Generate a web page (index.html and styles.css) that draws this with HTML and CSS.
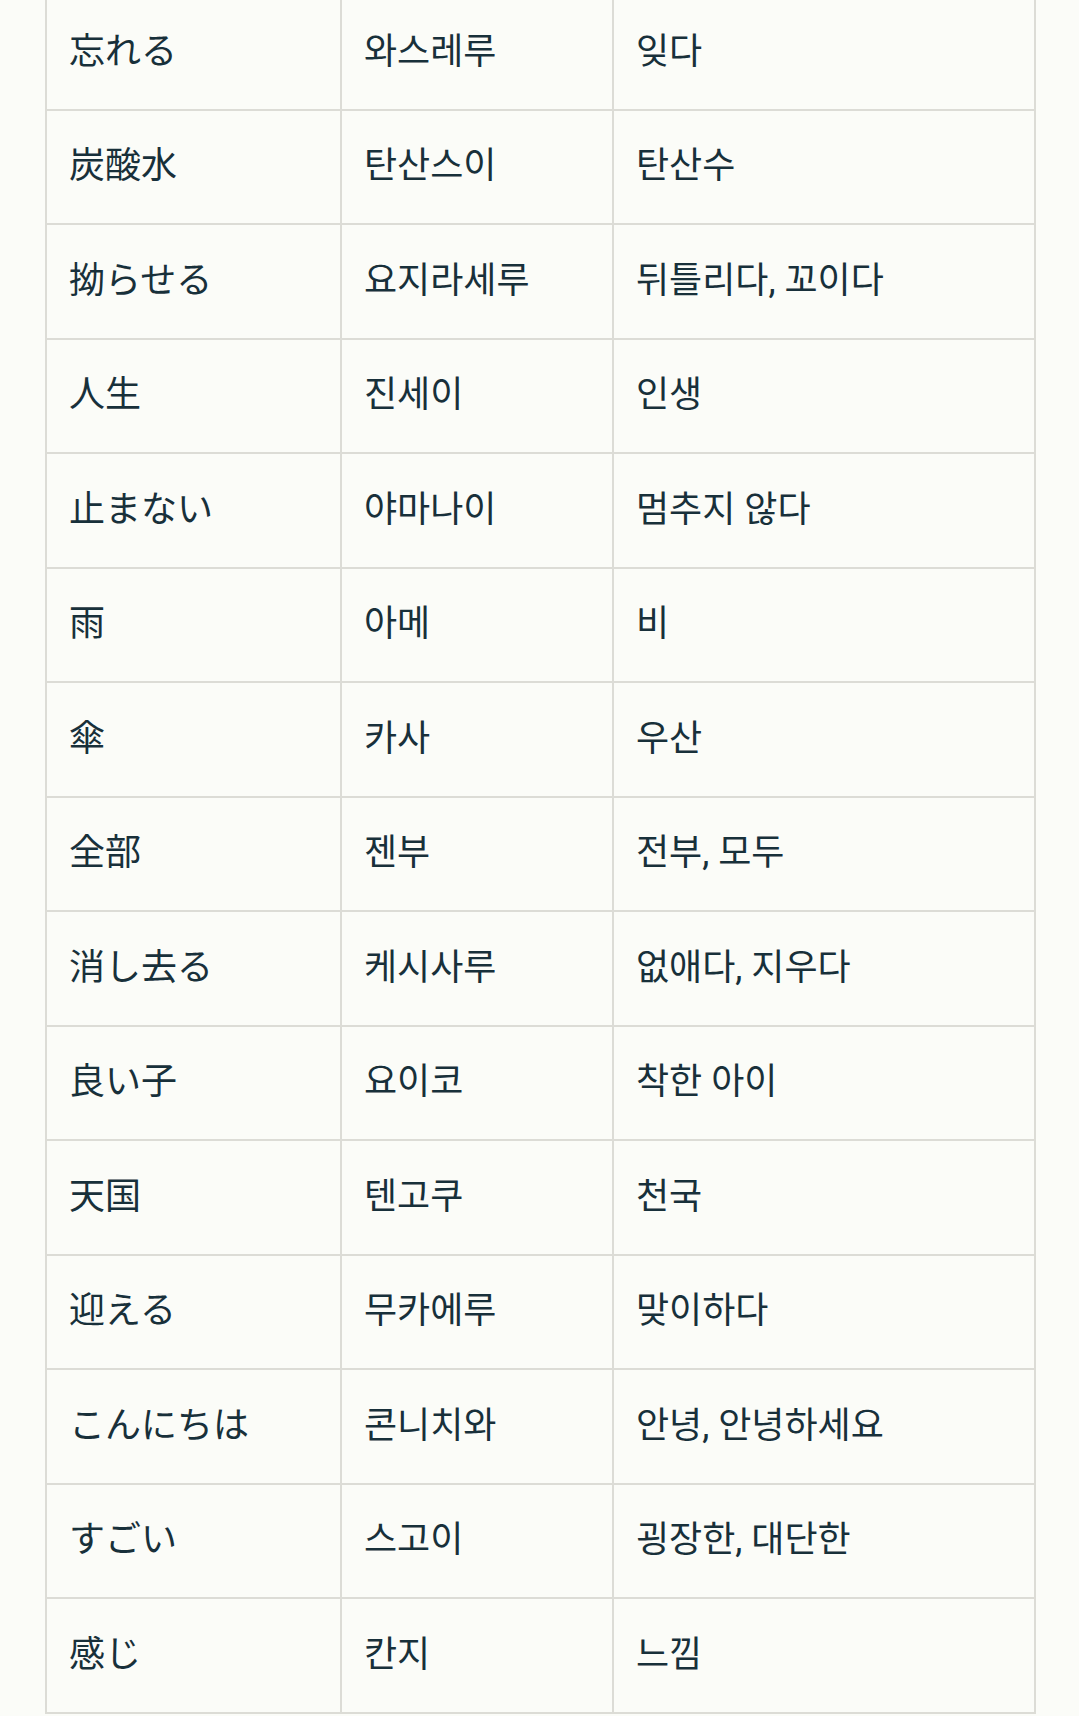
FILE: index.html
```html
<!DOCTYPE html>
<html lang="ko">
<head>
<meta charset="utf-8">
<link rel="stylesheet" href="styles.css">
</head>
<body>
<div class="wrap">
<table class="vocab">
<tbody>
<tr><td class="ja" lang="ja">忘れる</td><td class="ko">와스레루</td><td class="ko">잊다</td></tr>
<tr><td class="ja" lang="ja">炭酸水</td><td class="ko">탄산스이</td><td class="ko">탄산수</td></tr>
<tr><td class="ja" lang="ja">拗らせる</td><td class="ko">요지라세루</td><td class="ko">뒤틀리다, 꼬이다</td></tr>
<tr><td class="ja" lang="ja">人生</td><td class="ko">진세이</td><td class="ko">인생</td></tr>
<tr><td class="ja" lang="ja">止まない</td><td class="ko">야마나이</td><td class="ko">멈추지 않다</td></tr>
<tr><td class="ja" lang="ja">雨</td><td class="ko">아메</td><td class="ko">비</td></tr>
<tr><td class="ja" lang="ja">傘</td><td class="ko">카사</td><td class="ko">우산</td></tr>
<tr><td class="ja" lang="ja">全部</td><td class="ko">젠부</td><td class="ko">전부, 모두</td></tr>
<tr><td class="ja" lang="ja">消し去る</td><td class="ko">케시사루</td><td class="ko">없애다, 지우다</td></tr>
<tr><td class="ja" lang="ja">良い子</td><td class="ko">요이코</td><td class="ko">착한 아이</td></tr>
<tr><td class="ja" lang="ja">天国</td><td class="ko">텐고쿠</td><td class="ko">천국</td></tr>
<tr><td class="ja" lang="ja">迎える</td><td class="ko">무카에루</td><td class="ko">맞이하다</td></tr>
<tr><td class="ja" lang="ja">こんにちは</td><td class="ko">콘니치와</td><td class="ko">안녕, 안녕하세요</td></tr>
<tr><td class="ja" lang="ja">すごい</td><td class="ko">스고이</td><td class="ko">굉장한, 대단한</td></tr>
<tr><td class="ja" lang="ja">感じ</td><td class="ko">칸지</td><td class="ko">느낌</td></tr>
</tbody>
</table>
</div>
</body>
</html>
```
FILE: styles.css
```css
html, body {
  margin: 0;
  padding: 0;
  background: #fbfcf8;
}
.wrap {
  padding: 0 45px 0 45px;
  margin-top: -6px;
}
.vocab {
  width: 989px;
  border-collapse: collapse;
  table-layout: fixed;
  color: #18303a;
  font-size: 36px;
}
.vocab td {
  border: 2px solid #dcdcd6;
  height: 114.5px;
  padding: 0 0 0 22px;
  vertical-align: middle;
  line-height: 1.2;
  box-sizing: border-box;
  white-space: nowrap;
}
.vocab td:nth-child(1) { width: 295px; }
.vocab td:nth-child(2) { width: 272px; }
.vocab td:nth-child(3) { width: 422px; }
.ja {
  font-family: Roboto, "Noto Sans CJK JP", sans-serif;
}
.ko {
  font-family: Roboto, "Noto Sans CJK KR", sans-serif;
}
```
